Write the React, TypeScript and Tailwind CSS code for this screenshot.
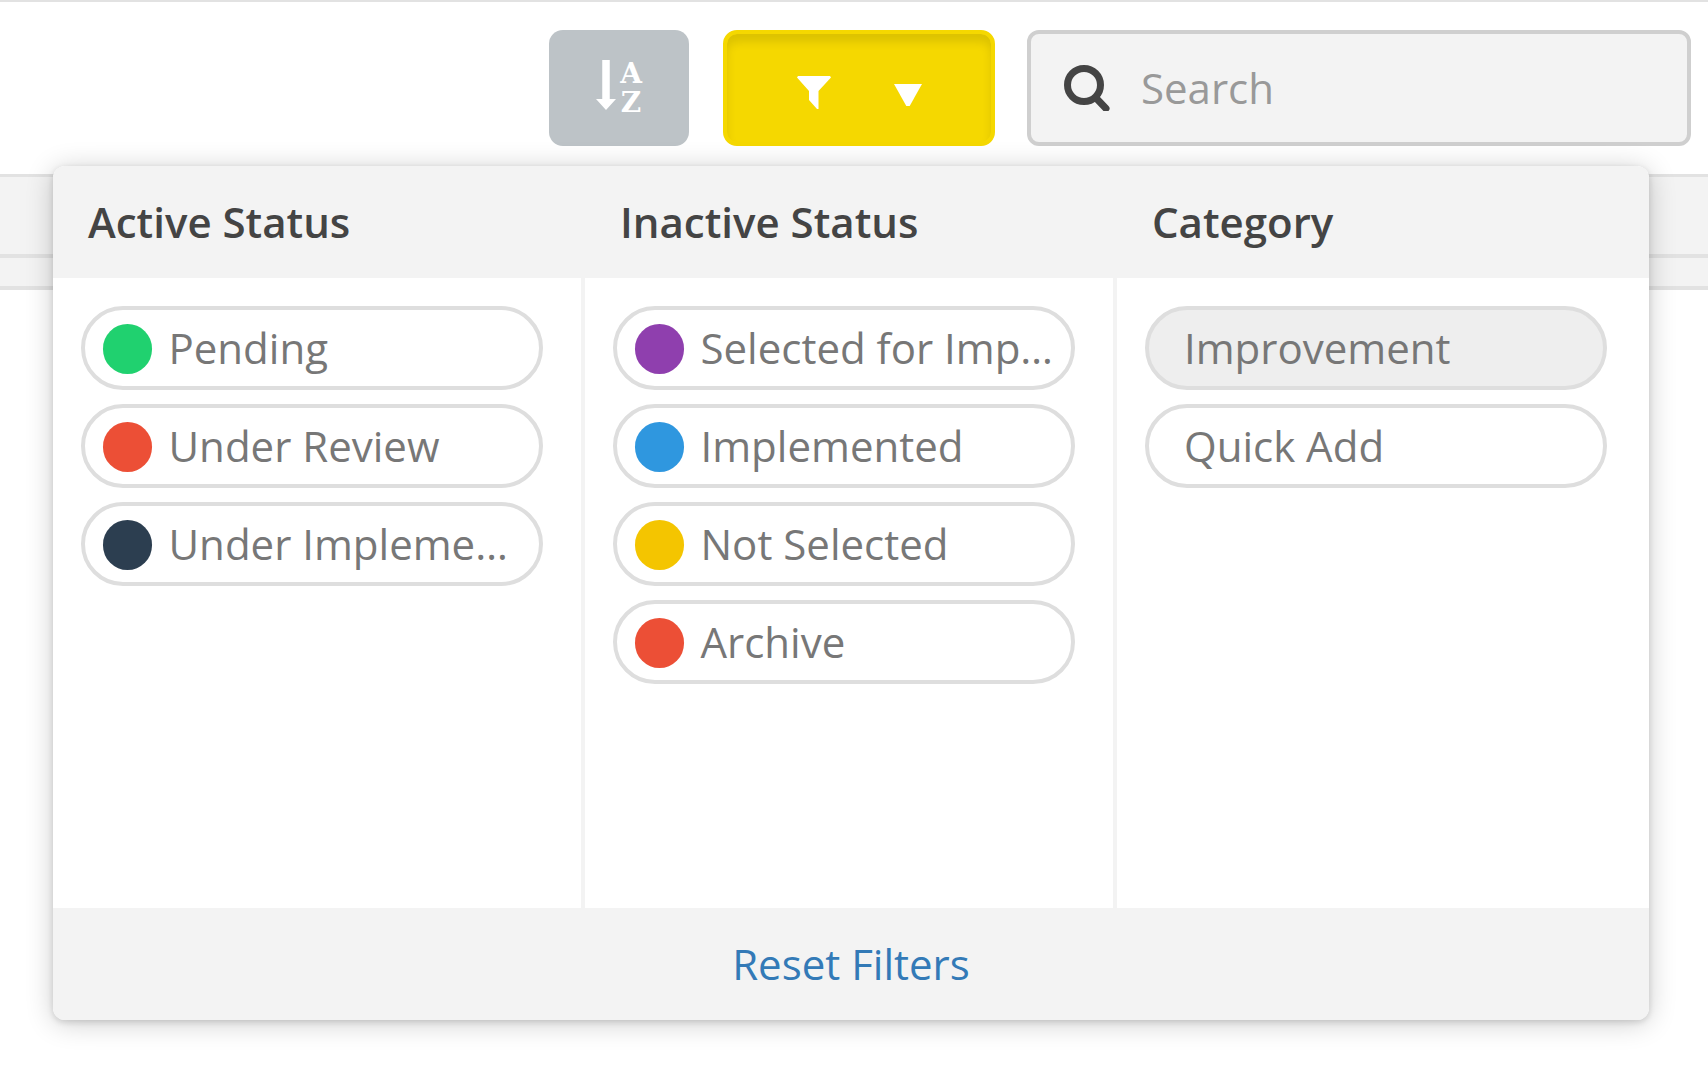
const activeStatus = [
  { label: "Pending", dot: "bg-[#20d16f]" },
  { label: "Under Review", dot: "bg-[#ec4f36]" },
  { label: "Under Impleme…", dot: "bg-[#2c3e50]" },
];

const inactiveStatus = [
  { label: "Selected for Imp…", dot: "bg-[#8f3fae]" },
  { label: "Implemented", dot: "bg-[#2f97df]" },
  { label: "Not Selected", dot: "bg-[#f4c500]" },
  { label: "Archive", dot: "bg-[#ec4f36]" },
];

const categories = [
  { label: "Improvement", selected: true },
  { label: "Quick Add", selected: false },
];

const StatusPill = ({ label, dot }: { label: string; dot: string }) => (
  <div className="flex h-[84px] w-[462px] items-center rounded-full border-4 border-[#dedede] pl-[17.5px]">
    <span className={`mt-[1px] h-[50px] w-[49px] shrink-0 rounded-full ${dot}`} />
    <span className="ml-[17px] whitespace-nowrap pb-[2px] text-[42px] text-[#777]">{label}</span>
  </div>
);

const CategoryPill = ({ label, selected }: { label: string; selected: boolean }) => (
  <div
    className={`flex h-[84px] w-[462px] items-center rounded-full border-4 border-[#dedede] pl-[35px] ${
      selected ? "bg-[#eeeeee]" : ""
    }`}
  >
    <span className="whitespace-nowrap pb-[2px] text-[42px] text-[#777]">{label}</span>
  </div>
);

const SortIcon = () => (
  <div className="flex items-start">
    <svg width="20" height="50" viewBox="0 0 20 50" className="mt-[1px]">
      <path d="M6.25 0h7.5v39H20L10 50 0 39h6.25z" fill="#fff" />
    </svg>
    <div className="ml-[4px] flex flex-col items-center font-['DejaVu_Serif',serif] text-[28px] font-bold leading-[29px] text-white">
      <span>A</span>
      <span>Z</span>
    </div>
  </div>
);

const App = () => {
  return (
    <div className="relative h-[1068px] w-[1708px] overflow-hidden border-t-2 border-[#e2e2e2] bg-white font-['Open_Sans',sans-serif]">
      {/* Toolbar */}
      <div className="flex h-[144px] items-end justify-end pr-[17px]">
        <button className="flex h-[116px] w-[140px] items-center justify-center rounded-[14px] bg-[#bdc3c7]">
          <SortIcon />
        </button>
        <button className="ml-[34px] flex h-[116px] w-[272px] items-center justify-center rounded-[14px] border-4 border-[#f5d800] bg-[#f5d800] shadow-[inset_0_8px_10px_rgba(0,0,0,0.1)]">
          <svg width="34" height="33" viewBox="0 0 34 33" className="mt-[9px]">
            <path d="M0 1.5 1 0h32l1 1.5L21.5 15v18H20l-8-9V15z" fill="#fff" />
          </svg>
          <svg width="28" height="22" viewBox="0 0 28 22" className="ml-[63px] mt-[14px]">
            <path d="M0 0h28L14 25z" fill="#fff" />
          </svg>
        </button>
        <div className="ml-[32px] flex h-[116px] w-[664px] items-center rounded-[12px] border-4 border-[#cfcfcf] bg-[#f3f3f3] pl-[33px]">
          <svg width="46" height="46" viewBox="0 0 46 46" fill="none" stroke="#444">
            <circle cx="20" cy="20" r="16.5" strokeWidth="7" />
            <path d="M32 33l10 10.5" strokeWidth="7" strokeLinecap="round" />
          </svg>
          <span className="ml-[31px] pb-[2px] text-[42px] text-[#999]">Search</span>
        </div>
      </div>

      {/* Table header behind the dropdown */}
      <div className="mt-[28px] h-[80px] border-t-[3px] border-[#e2e2e2] bg-[#f3f3f3]" />
      <div className="h-[36px] border-y-4 border-[#e2e2e2] bg-[#f3f3f3]" />

      {/* Filter dropdown */}
      <div className="absolute left-[53px] top-[164px] flex h-[854px] w-[1596px] flex-col overflow-hidden rounded-[12px] bg-white shadow-[0_2px_6px_rgba(0,0,0,0.14),0_3px_28px_rgba(0,0,0,0.2)]">
        <div className="grid h-[112px] shrink-0 grid-cols-3 bg-[#f3f3f3] pb-[2px] text-[42px] font-semibold text-[#444]">
          <div className="flex items-center pl-[35px]">Active Status</div>
          <div className="flex items-center pl-[35px]">Inactive Status</div>
          <div className="flex items-center pl-[35px]">Category</div>
        </div>
        <div className="grid flex-1 grid-cols-3">
          <div className="flex flex-col gap-[14px] border-r-4 border-[#f3f3f3] pl-[28px] pt-[28px]">
            {activeStatus.map((s) => (
              <StatusPill key={s.label} label={s.label} dot={s.dot} />
            ))}
          </div>
          <div className="flex flex-col gap-[14px] border-r-4 border-[#f3f3f3] pl-[28px] pt-[28px]">
            {inactiveStatus.map((s) => (
              <StatusPill key={s.label} label={s.label} dot={s.dot} />
            ))}
          </div>
          <div className="flex flex-col gap-[14px] pl-[28px] pt-[28px]">
            {categories.map((c) => (
              <CategoryPill key={c.label} label={c.label} selected={c.selected} />
            ))}
          </div>
        </div>
        <div className="flex h-[112px] shrink-0 items-center justify-center bg-[#f3f3f3] pb-[2px] text-[42px] text-[#337ab7]">
          Reset Filters
        </div>
      </div>
    </div>
  );
};

export default App;
